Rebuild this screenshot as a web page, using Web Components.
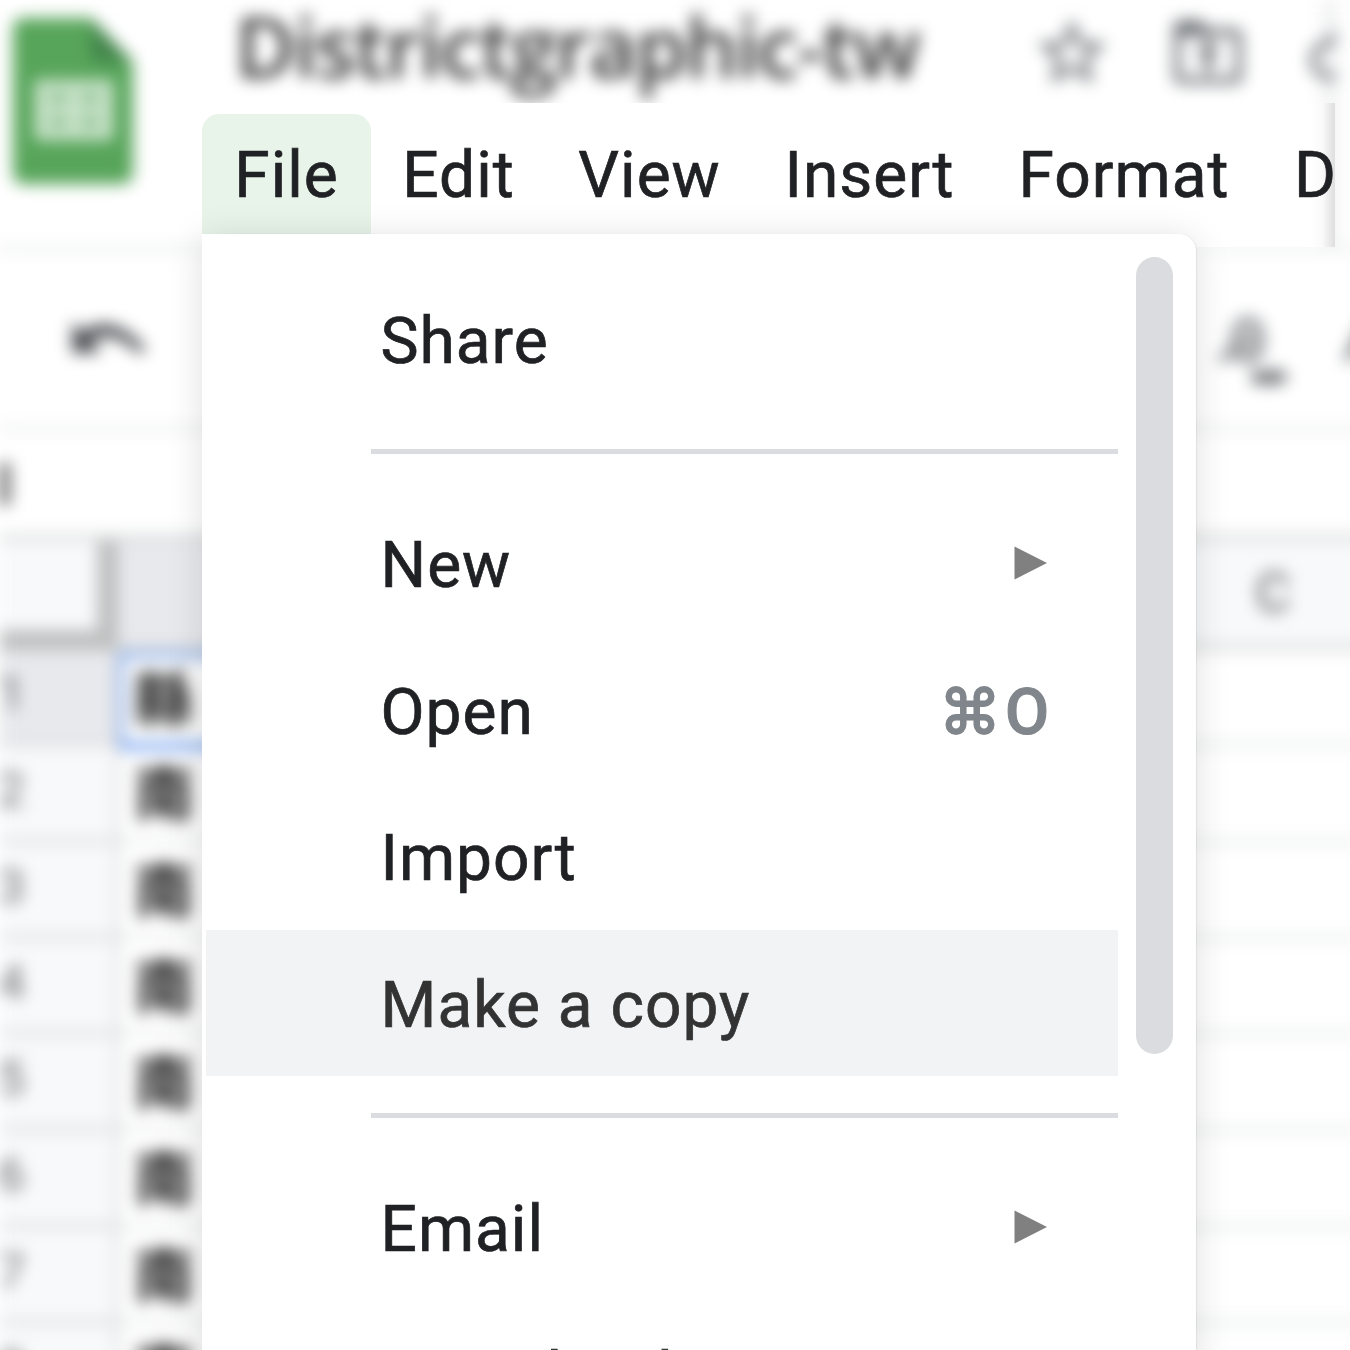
<!DOCTYPE html>
<html lang="en">
<head>
<meta charset="utf-8">
<title>Districtgraphic-tw</title>
<style>
html,body{margin:0;background:#fff;width:1350px;height:1350px;overflow:hidden;font-family:Roboto,"Liberation Sans",sans-serif;color:#202124}
</style>
</head>
<body>
<sheet-app></sheet-app>
<script>
function define(name, html, setup) {
  customElements.define(name, class extends HTMLElement {
    connectedCallback() {
      if (this.shadowRoot) return;
      const root = this.attachShadow({ mode: 'open' });
      root.innerHTML = html;
      if (setup) setup(this, root);
    }
  });
}

/* ---- blurred document chrome ---- */
define('doc-header', `
<style>
:host{display:flex;height:251px;box-sizing:border-box;align-items:flex-start;border-bottom:5px solid #eaecef;background:#fff}
.logo{flex:none;width:124px;height:170px;margin:16px 0 0 11px}
.title{flex:none;margin:-6px 0 0 100px;width:692px;font:600 83px/104px "Open Sans",sans-serif;letter-spacing:-1.8px;color:#3a3a3b;white-space:nowrap}
.icons{display:flex;flex:none;box-sizing:border-box;width:409px;height:250px;padding:12px 0 0 104px;gap:54px;overflow:hidden;background:linear-gradient(90deg,transparent 390px,#e8e9ea 409px)}
.icons svg{flex:none;display:block;width:82px;height:82px}
</style>
<svg class="logo" viewBox="0 0 124 170"><path d="M12 2H80L122 46V156Q122 168 110 168H12Q2 168 2 156V14Q2 2 12 2Z" fill="#57a55a"/><path d="M80 2L122 46H90Q80 46 80 36Z" fill="#42854a"/><path d="M24 64H102V124H24Z" fill="#cfe6d0"/><path d="M37 76H57V88H37ZM69 76H89V88H69ZM37 100H57V112H37ZM69 100H89V112H69Z" fill="#8dc290"/></svg>
<span class="title">Districtgraphic-tw</span>
<span class="icons">
<svg viewBox="0 0 24 24" fill="#696d72"><path d="M22 9.24l-7.19-.62L12 2 9.19 8.63 2 9.24l5.46 4.73L5.82 21 12 17.27 18.18 21l-1.63-7.03L22 9.24zM12 15.4l-3.76 2.27 1-4.28-3.32-2.88 4.38-.38L12 6.1l1.71 4.04 4.38.38-3.32 2.88 1 4.28L12 15.4z"/></svg>
<svg viewBox="0 0 24 24" fill="#696d72"><path d="M20 4.800h-8l-2-2.300H4c-1.100 0-2 .9-2 2V19c0 1.100.9 2 2 2h16c1.100 0 2-.9 2-2V7c0-1.100-.9-2.200-2-2.200zm0 14.200H4V7h16v12zM10.800 8h2.400v3h2.300l-3.500 3.500L8.500 11h2.300zM10.800 13h2.400v4.500h-2.400z"/></svg>
<svg viewBox="0 0 24 24" fill="#74787d"><path transform="translate(2)" d="M19.350 10.040A7.490 7.490 0 0 0 12 4C9.110 4 6.600 5.640 5.350 8.040A5.994 5.994 0 0 0 0 14c0 3.310 2.690 6 6 6h13c2.760 0 5-2.240 5-5s-2.050-4.780-4.650-4.960zM19 18H6c-2.210 0-4-1.790-4-4s1.790-4 4-4h.7C7.400 7.700 9.500 6 12 6c3 0 5.500 2.500 5.500 6H19c1.700 0 3 1.300 3 3s-1.300 3-3 3z"/></svg>
</span>`);

define('tool-bar', `
<style>
:host{display:flex;justify-content:space-between;height:180px;box-sizing:border-box;padding:63px 0 0 68px;border-bottom:5px solid #eaecef;background:#fff}
svg{display:block;flex:none}
.right{display:flex;gap:50px;width:180px;margin-right:-8px}
</style>
<svg width="82" height="50" viewBox="0 0 82 50"><path d="M4 8L14 17Q46 -3 78 35L71 40Q45 15 24 27L33 39H4Z" fill="#505257"/></svg>
<span class="right">
<svg width="76" height="76" viewBox="0 0 76 76"><path d="M2 46Q17 40 17 27Q18 7 30 7Q43 7 42 28Q42 45 30 45Q18 45 18 27" fill="none" stroke="#85888c" stroke-width="8"/><path d="M25 20H35V34H25Z" fill="#8b8e91"/><path d="M34 57H56V53L72 63L56 73V70H34Z" fill="#6f7276"/></svg>
<svg width="60" height="60" viewBox="0 0 60 60"><path d="M3 47L24 6L45 47M10 33H38" fill="none" stroke="#777b80" stroke-width="8"/></svg>
</span>`);

define('formula-bar', `
<style>
:host{display:flex;align-items:center;height:110px;box-sizing:border-box;border-bottom:7px solid #dcdede;background:#fff}
i{width:10px;height:42px;margin-top:2px;background:#666}
</style><i></i>`);

define('grid-head', `
<style>
:host{display:flex;height:110px;box-sizing:border-box;border-bottom:7px solid #dcdede;background:#f8f9fb}
.corner{flex:none;width:118px;height:109px;box-sizing:border-box;border-right:21px solid #bebfbf;border-bottom:20px solid #bebfbf}
.a{flex:none;width:1059px;background:#e8e9ed}
.c{width:192px;font:500 55px/104px Roboto,sans-serif;text-align:center;color:#77797c}
</style>
<div class="corner"></div><div class="a"></div><div class="c">C</div>`);

define('grid-row', `
<style>
:host{display:flex;height:96.300px;box-sizing:border-box;background:#fff}
.n{flex:none;width:120px;box-sizing:border-box;border-right:6px solid #e0e2e2;border-bottom:6px solid #dedfe0;background:#f8f9fb;font:400 48px/85px Roboto,sans-serif;color:#65686b;text-indent:-2px}
.v{flex:1;box-sizing:border-box;padding-left:14px;border-bottom:5px solid #e7e9e9;font:700 60px/86px "Noto Sans CJK TC",sans-serif;color:#1c1c1c}
:host([selected]) .n{background:#e8e9ed;width:117px}
:host([selected]) .v{border:8px solid #72a0ee;border-top-color:#96b6ec;border-left-color:#9fbbed;padding-left:9px;line-height:74px;height:99px;flex:0 0 1060px}
.rest{display:none}
:host([selected]) .rest{display:block;flex:1;border-bottom:5px solid #e7e9e9}
</style>
<div class="n"></div><div class="v"><slot></slot></div><div class="rest"></div>`,
(el, root) => { root.querySelector('.n').textContent = el.getAttribute('n'); });

define('sheet-backdrop', `
<style>
:host{display:block;width:1390px;height:1390px;overflow:hidden;filter:blur(8px)}
</style>
<doc-header></doc-header><tool-bar></tool-bar><formula-bar></formula-bar><grid-head></grid-head>
<grid-row n="1" selected>縣</grid-row><grid-row n="2">南</grid-row><grid-row n="3">南</grid-row><grid-row n="4">南</grid-row><grid-row n="5">南</grid-row><grid-row n="6">南</grid-row><grid-row n="7">南</grid-row><grid-row n="8">南</grid-row>`);

/* ---- menu bar ---- */
define('menu-tab', `
<style>
:host{display:block;flex:none;height:133px;line-height:123px;text-align:center;white-space:nowrap}
:host([open]){background:#e8f3ea;border-radius:17px 17px 0 0}
</style><slot></slot>`,
(el) => { el.style.width = el.getAttribute('w') + 'px'; });

define('menu-bar', `
<style>
:host{display:flex;box-sizing:border-box;width:1334.500px;height:144px;margin-top:103px;padding:11px 0 0 202px;overflow:hidden;font-size:64px;letter-spacing:1px;-webkit-text-stroke:.7px #202124;background:linear-gradient(90deg,transparent 1310px,rgba(0,0,0,.02) 1322px,rgba(0,0,0,.12) 1334px),linear-gradient(90deg,transparent 202px,#fff 202px)}
</style>
<menu-tab w="169" open>File</menu-tab><menu-tab w="175">Edit</menu-tab><menu-tab w="207">View</menu-tab><menu-tab w="233">Insert</menu-tab><menu-tab w="276">Format</menu-tab><menu-tab w="107">D</menu-tab>`);

/* ---- file menu ---- */
define('menu-item', `
<style>
:host{display:flex;align-items:center;justify-content:space-between;box-sizing:border-box;height:146.500px;margin-left:4px;padding:0 71px 0 174.500px;line-height:141px;white-space:nowrap;-webkit-text-stroke:.7px currentColor}
:host([active]){background:#f1f3f4;color:#333}
.label,.hint.key{padding-top:5px}
.hint{display:flex;align-items:center;color:#80868b;font-weight:500;letter-spacing:0}
.hint.key{margin-right:-2px;-webkit-text-stroke:1px currentColor}
.cmd{font:400 62px/141px "DejaVu Sans",sans-serif;margin-right:4px;-webkit-text-stroke:2px currentColor}
svg{display:block;margin-top:-1px}
</style>
<span class="label"><slot></slot></span><span class="hint"></span>`,
(el, root) => {
  const hint = root.querySelector('.hint');
  if (el.hasAttribute('sub')) hint.innerHTML = '<svg width="33" height="34" viewBox="0 0 33 34"><path d="M0.500 0.500L33 17L0.500 33.500Z" fill="#808080"/></svg>';
  if (el.hasAttribute('key')) {
    hint.classList.add('key');
    hint.innerHTML = '<span class="cmd">⌘</span><span>' + el.getAttribute('key') + '</span>';
  }
});

define('menu-rule', `<style>:host{display:block;height:5px;margin:36.500px 0 36.500px 169px;background:#dadce0}</style>`);

define('file-menu', `
<style>
:host{display:flex;box-sizing:border-box;width:994px;height:1150px;margin:234px 0 0 202px;padding-top:31.500px;border-radius:0 17px 0 0;background:#fff;box-shadow:0 4px 36px rgba(0,0,0,.13),1px 0 1px rgba(60,64,67,.08);font-size:64px;letter-spacing:1px}
.list{flex:none;width:916px}
.thumb{flex:none;width:37px;height:797px;margin:-9px 0 0 18px;border-radius:19px;background:#dadce0}
</style>
<div class="list">
<menu-item>Share</menu-item><menu-rule></menu-rule>
<menu-item sub>New</menu-item><menu-item key="O">Open</menu-item><menu-item>Import</menu-item><menu-item active>Make a copy</menu-item><menu-rule></menu-rule>
<menu-item sub>Email</menu-item><menu-item>Download</menu-item>
</div><div class="thumb"></div>`);

define('sheet-app', `
<style>
:host{display:grid;grid-template:1350px/1350px;width:1350px;height:1350px;overflow:hidden}
:host>*{grid-area:1/1;align-self:start;justify-self:start}
sheet-backdrop{z-index:0}menu-bar{z-index:1}file-menu{z-index:2}
</style>
<sheet-backdrop></sheet-backdrop><menu-bar></menu-bar><file-menu></file-menu>`);
</script>
</body>
</html>
